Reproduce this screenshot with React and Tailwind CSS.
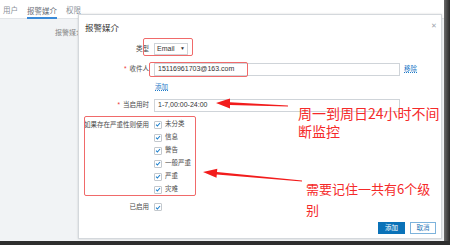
import React from "react";

const CJK = { fontFamily: '"Liberation Sans", "Noto Sans CJK SC", sans-serif' };
const RED = { fontFamily: '"Noto Sans CJK SC", sans-serif' };

function Check() {
  return (
    <span className="flex items-center justify-center w-[8px] h-[8px] border border-[#c3c8cd] bg-white rounded-[1px]">
      <svg width="7" height="7" viewBox="0 0 8 8">
        <path d="M1.4 4.3 L3.2 6 L6.7 2" fill="none" stroke="#1b7fcc" strokeWidth="1.4" />
      </svg>
    </span>
  );
}

function Row({ label, req, children, h }) {
  return (
    <div className={`grid grid-cols-[70px_1fr] gap-x-[5px] items-center ${h}`}>
      <div className="text-right text-[6.5px] text-[#4a4a4a] leading-none whitespace-nowrap">
        {req && <span className="text-[#e33] mr-[3px]">*</span>}
        {label}
      </div>
      <div className="flex items-center">{children}</div>
    </div>
  );
}

export default function App() {
  const levels = ["未分类", "信息", "警告", "一般严重", "严重", "灾难"];
  return (
    <div className="relative w-[450px] h-[245px] overflow-hidden bg-[#2e2e2e]" style={CJK}>
      <div className="flex">
        <div className="w-[444px] h-[241px] bg-[#f1f3f5] flex flex-col">
          <div className="h-[19px] bg-white border-b border-[#e2e5e8] flex items-end gap-[9px] pl-[3px]">
            <div className="text-[7.5px] text-[#8a9099] h-[17px] leading-[19px]">用户</div>
            <div className="text-[7.5px] text-[#6a7079] h-[17px] leading-[19px] border-b-2 border-[#3a8ad8] -mb-[1px]">报警媒介</div>
            <div className="text-[7.5px] text-[#8a9099] h-[17px] leading-[19px]">权限</div>
          </div>
          <div className="pl-[55px] pt-[10px] text-[7px] text-[#888] leading-none">报警媒介</div>
        </div>
        <div className="w-[6px] h-[241px] bg-gradient-to-r from-[#6a6a6a] to-[#2a2a2a]" />
      </div>

      {/* dialog */}
      <div className="absolute left-[78px] top-[14px] w-[364px] h-[225px] bg-white border border-[#d4d8dc] shadow-[0_0_2px_rgba(0,0,0,0.15)] flex flex-col">
        <div className="flex justify-between pl-[6px] pr-[4px] pt-[7px] h-[19px]">
          <div className="text-[8.5px] text-[#333] leading-[12px]">报警媒介</div>
          <div className="text-[7px] text-[#a0a6ad] leading-none">✕</div>
        </div>
        <div className="mt-[9px]">
          <Row label="类型" h="h-[12px]">
            <div className="w-[34px] h-[12px] border border-[#cfd4d9] flex items-center justify-between px-[2px] text-[7px] text-[#333]">
              <span>Email</span>
              <span className="text-[5px]">▼</span>
            </div>
          </Row>
        </div>
        <div className="mt-[8px]">
          <Row label="收件人" req h="h-[13px]">
            <div className="w-[246px] h-[13px] border border-[#cfd4d9] flex items-center px-[3px] text-[7px] text-[#333]">15116961703@163.com</div>
            <span className="ml-[4px] text-[6.5px] text-[#1f7bc8] underline decoration-dotted leading-none">移除</span>
          </Row>
        </div>
        <div className="mt-[5px]">
          <Row label="" h="h-[12px]">
            <span className="ml-[1px] text-[6.5px] text-[#1f7bc8] underline decoration-dotted leading-none">添加</span>
          </Row>
        </div>
        <div className="mt-[6px]">
          <Row label="当启用时" req h="h-[13px]">
            <div className="w-[246px] h-[13px] border border-[#cfd4d9] flex items-center px-[3px] text-[7px] text-[#333]">1-7,00:00-24:00</div>
          </Row>
        </div>
        <div className="mt-[6px] grid grid-cols-[70px_1fr] gap-x-[5px]">
          <div className="text-right text-[6.5px] text-[#4a4a4a] leading-[13px] whitespace-nowrap">如果存在严重性则使用</div>
          <div className="flex flex-col">
            {levels.map((l) => (
              <div key={l} className="h-[13px] flex items-center gap-[3px]">
                <Check />
                <span className="text-[6.5px] text-[#4a4a4a] leading-none">{l}</span>
              </div>
            ))}
          </div>
        </div>
        <div className="mt-[5px]">
          <Row label="已启用" h="h-[12px]">
            <Check />
          </Row>
        </div>
        <div className="mt-[9px] flex justify-end gap-[5px] pr-[5px]">
          <div className="w-[27px] h-[12px] bg-[#0a72b8] text-white text-[6.5px] flex items-center justify-center">添加</div>
          <div className="w-[26px] h-[12px] bg-white border border-[#7db3dc] text-[#2a78b8] text-[6.5px] flex items-center justify-center">取消</div>
        </div>
      </div>

      {/* annotation boxes */}
      <div className="absolute left-[143px] top-[38px] w-[50px] h-[18px] border border-[#f06a6a] rounded-[2px]" />
      <div className="absolute left-[149px] top-[62px] w-[99px] h-[15px] border border-[#f06a6a] rounded-[2px]" />
      <div className="absolute left-[84px] top-[116px] w-[112px] h-[80px] border border-[#f06a6a] rounded-[2px]" />

      {/* arrows */}
      <svg className="absolute left-0 top-0 pointer-events-none" width="450" height="245">
        <polygon fill="#f21c1c" points="216,103 230,98.6 230,102.3 288,105.6 288,106.6 230,104.9 230,108.4" />
        <polygon fill="#f21c1c" points="203,172 217.3,168.8 217,172.1 302,180.5 302,181.5 216.8,174.5 216.5,177.8" />
      </svg>

      {/* annotation texts */}
      <div className="absolute left-[298px] top-[104px] text-[14px] leading-[18px] text-[#f52a2a] whitespace-nowrap" style={RED}>
        周一到周日24小时不间<br />断监控
      </div>
      <div className="absolute left-[306px] top-[178px] text-[13px] leading-[21px] text-[#f52a2a] whitespace-nowrap" style={RED}>
        需要记住一共有6个级<br />别
      </div>
    </div>
  );
}
